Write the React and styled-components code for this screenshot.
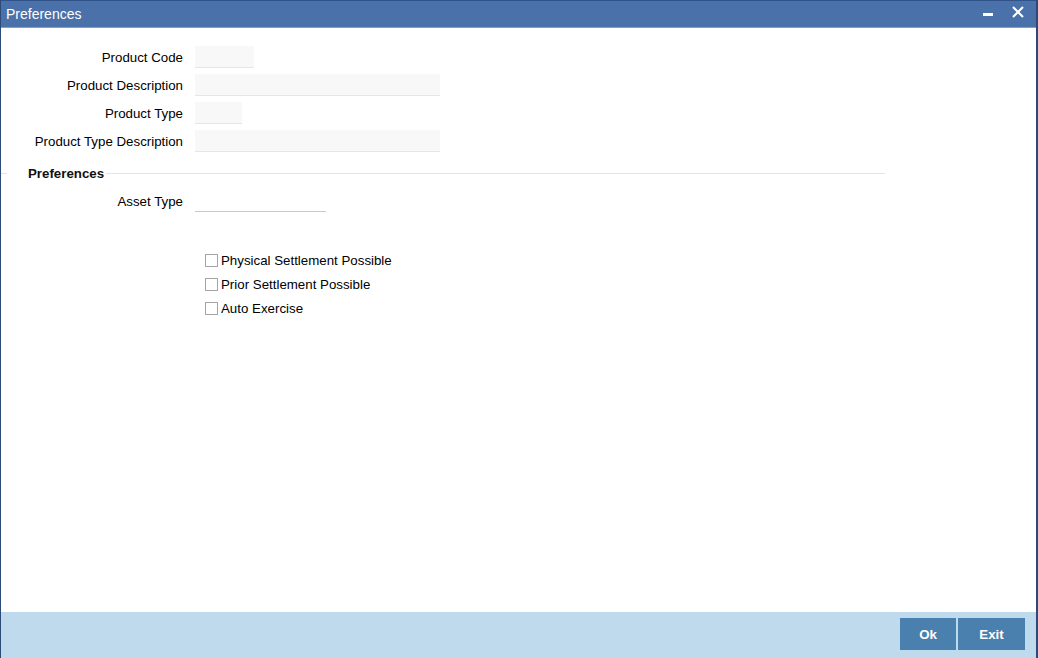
import React from 'react'
import styled, { createGlobalStyle } from 'styled-components'

const Global = createGlobalStyle`
  html, body { margin: 0; padding: 0; background: #fff; }
  body { font-family: Arial, "Liberation Sans", sans-serif; }
`

const Window = styled.div`
  width: 1038px;
  height: 658px;
  box-sizing: border-box;
  border-left: 1px solid #2b4a78;
  border-right: 2px solid #2b4a78;
  display: flex;
  flex-direction: column;
  background: #fff;
`

const TitleBar = styled.div`
  height: 28px;
  box-sizing: border-box;
  background: #4a71a9;
  border-top: 1px solid #2f5288;
  border-bottom: 1px solid #8d9fb3;
  display: flex;
  align-items: center;
  justify-content: space-between;
  padding: 0 12px 0 5px;
  color: #fff;
  font-size: 14px;
`

const TitleIcons = styled.div`
  display: flex;
  align-items: center;
  gap: 19px;
  margin-top: -4px;
`

const Body = styled.div`
  flex: 1;
  padding-top: 18px;
`

const Row = styled.div`
  display: flex;
  align-items: center;
  height: 22px;
  margin-bottom: 6px;
`

const Label = styled.div`
  width: 194px;
  text-align: right;
  font-size: 13.3px;
  color: #000;
  padding-right: 12px;
  box-sizing: border-box;
`

const Field = styled.div`
  width: ${p => p.w}px;
  height: 22px;
  box-sizing: border-box;
  background: ${p => (p.white ? '#fff' : '#f8f8f8')};
  border-bottom: 1px solid ${p => (p.white ? '#c8c8c8' : '#e6e6e6')};
`

const Legend = styled.div`
  display: flex;
  align-items: center;
  width: 884px;
  margin: 10px 0 6px;
  height: 22px;
`

const LegendLine = styled.div`
  height: 1px;
  background: #e4e4e4;
  width: ${p => (p.w ? `${p.w}px` : 'auto')};
  flex: ${p => (p.w ? 'none' : 1)};
`

const LegendText = styled.div`
  font-size: 13.3px;
  font-weight: bold;
  color: #111;
  padding: 0 2px 0 21px;
`

const Checks = styled.div`
  padding: 34px 0 0 204px;
  display: flex;
  flex-direction: column;
  gap: 8px;
`

const CheckRow = styled.label`
  display: flex;
  align-items: center;
  height: 16px;
  font-size: 13.3px;
  color: #000;
`

const Box = styled.span`
  width: 13px;
  height: 13px;
  box-sizing: border-box;
  border: 1px solid #a5a5a5;
  background: #fff;
  margin-right: 3px;
`

const Footer = styled.div`
  height: 46px;
  background: #bfdaed;
  display: flex;
  justify-content: flex-end;
  align-items: flex-start;
  padding: 6px 11px 0 0;
  box-sizing: border-box;
  gap: 2px;
`

const Button = styled.button`
  height: 32px;
  width: ${p => p.w}px;
  border: none;
  background: #4a80ae;
  color: #fff;
  font-family: Arial, "Liberation Sans", sans-serif;
  font-weight: bold;
  font-size: 13.3px;
  padding: 0;
`

const fields = [
  { label: 'Product Code', w: 59 },
  { label: 'Product Description', w: 245 },
  { label: 'Product Type', w: 47 },
  { label: 'Product Type Description', w: 245 },
]

const checks = ['Physical Settlement Possible', 'Prior Settlement Possible', 'Auto Exercise']

export default function App() {
  return (
    <Window>
      <Global />
      <TitleBar>
        <span>Preferences</span>
        <TitleIcons>
          <svg width="10" height="10" viewBox="0 0 10 10">
            <rect x="0" y="6" width="10" height="3" fill="#fff" />
          </svg>
          <svg width="12" height="12" viewBox="0 0 12 12">
            <path d="M1 1 L11 11 M11 1 L1 11" stroke="#fff" strokeWidth="2" />
          </svg>
        </TitleIcons>
      </TitleBar>
      <Body>
        {fields.map(f => (
          <Row key={f.label}>
            <Label>{f.label}</Label>
            <Field w={f.w} />
          </Row>
        ))}
        <Legend>
          <LegendLine w={6} />
          <LegendText>Preferences</LegendText>
          <LegendLine />
        </Legend>
        <Row>
          <Label>Asset Type</Label>
          <Field w={131} white />
        </Row>
        <Checks>
          {checks.map(c => (
            <CheckRow key={c}>
              <Box />
              {c}
            </CheckRow>
          ))}
        </Checks>
      </Body>
      <Footer>
        <Button w={56}>Ok</Button>
        <Button w={67}>Exit</Button>
      </Footer>
    </Window>
  )
}
